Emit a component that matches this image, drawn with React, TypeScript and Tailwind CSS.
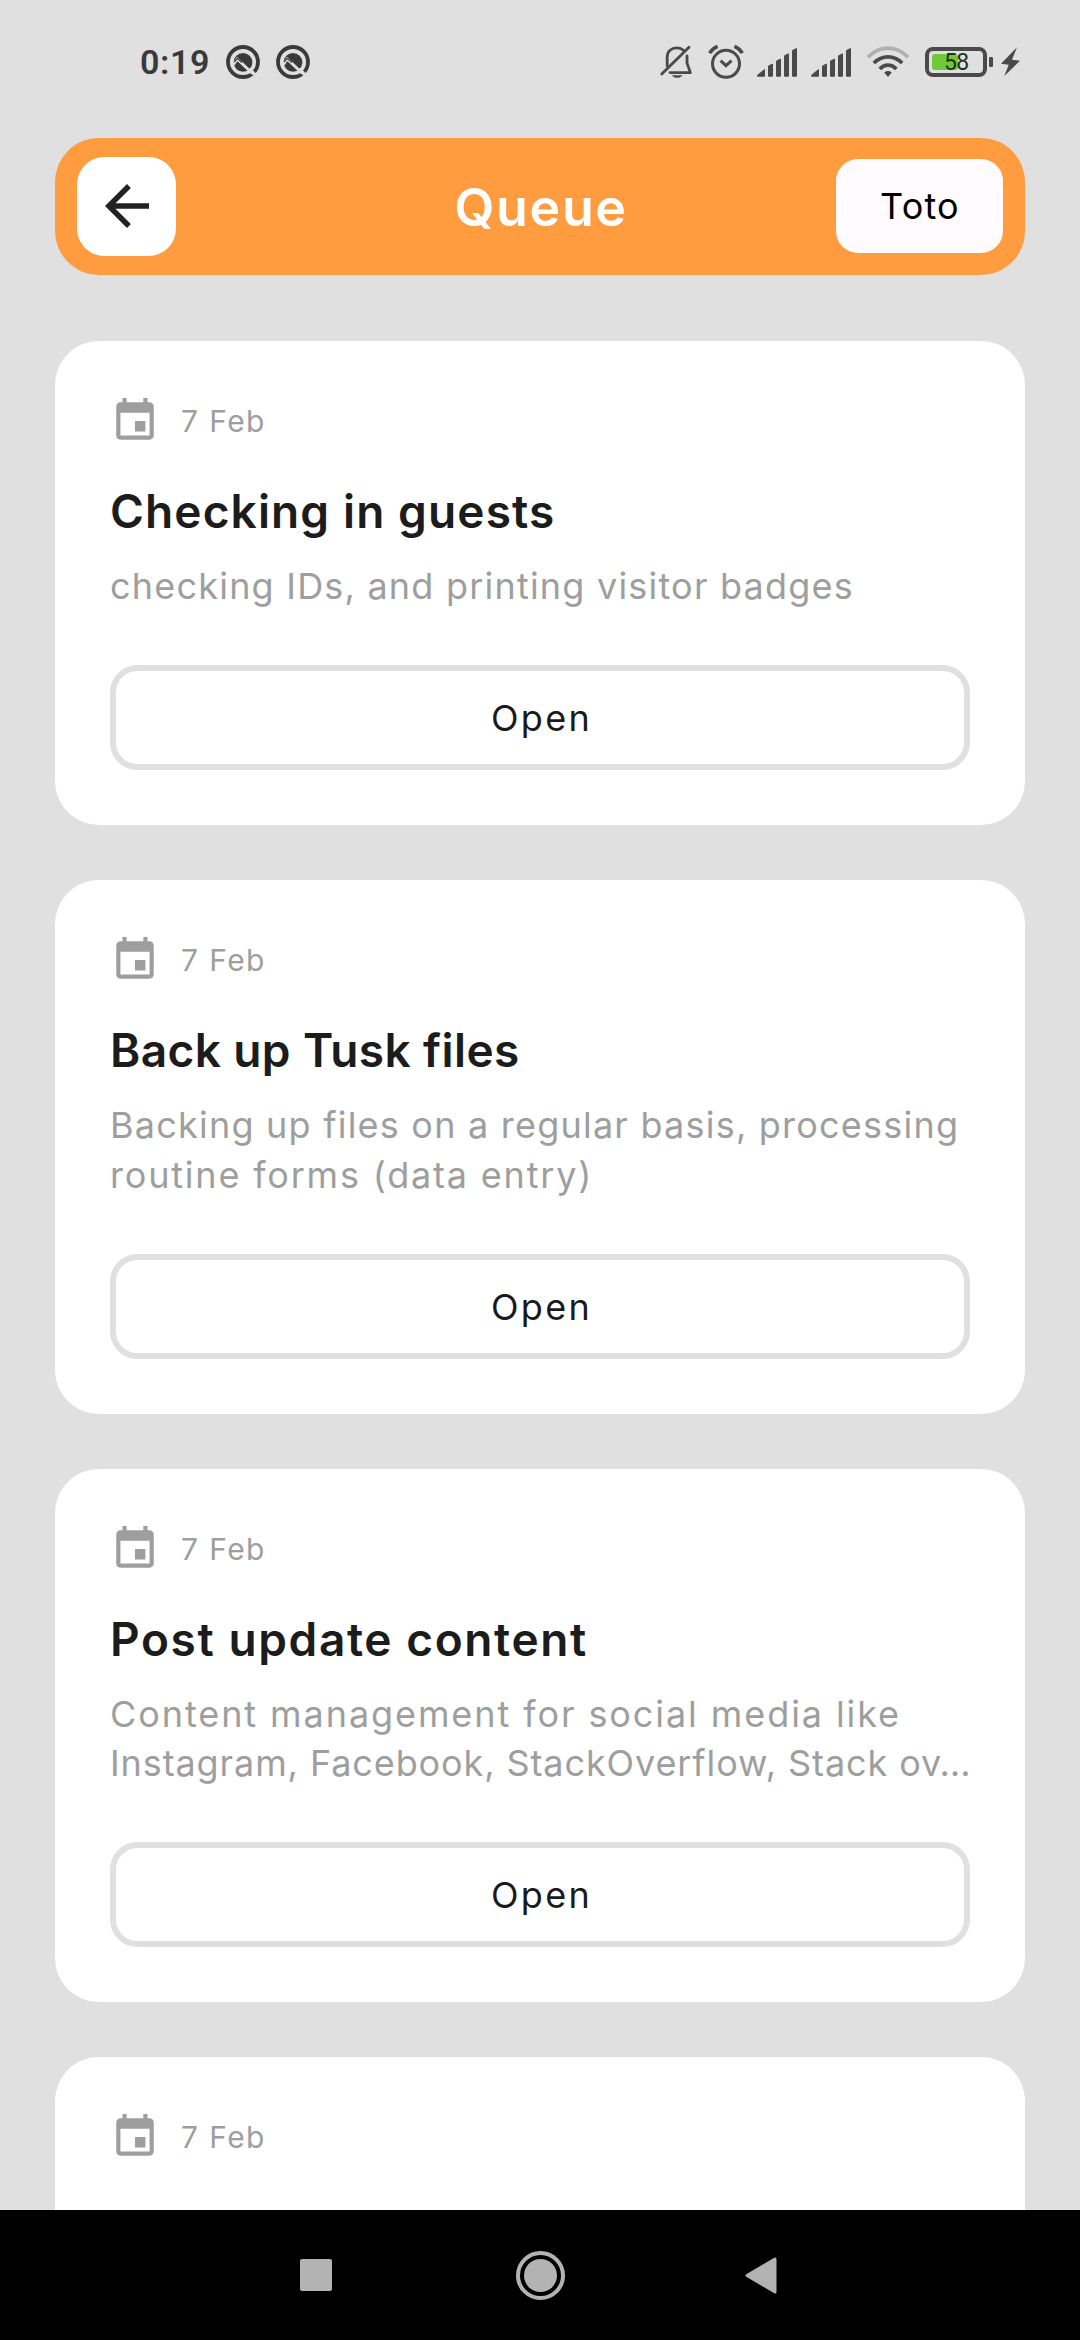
import React from "react";

type Line = { text: string; tracking: string };
type Task = { title: string; titleTracking: string; lines: Line[]; height: string };

const tasks: Task[] = [
  {
    title: "Checking in guests",
    titleTracking: "tracking-[1.13px]",
    lines: [{ text: "checking IDs, and printing visitor badges", tracking: "tracking-[1.21px]" }],
    height: "h-[484px]",
  },
  {
    title: "Back up Tusk files",
    titleTracking: "tracking-[0.39px]",
    lines: [
      { text: "Backing up files on a regular basis, processing", tracking: "tracking-[1.22px]" },
      { text: "routine forms (data entry)", tracking: "tracking-[1.81px]" },
    ],
    height: "h-[533.5px]",
  },
  {
    title: "Post update content",
    titleTracking: "tracking-[1.61px]",
    lines: [
      { text: "Content management for social media like", tracking: "tracking-[1.92px]" },
      { text: "Instagram, Facebook, StackOverflow, Stack ov…", tracking: "tracking-[0.9px]" },
    ],
    height: "h-[533.5px]",
  },
];

function BetaIcon() {
  return (
    <svg className="h-[36px] w-[36px]" viewBox="225 43.5 36 36" fill="none">
      <circle cx="243" cy="61.5" r="15" stroke="#3a3a3a" strokeWidth="3.8" />
      <circle cx="243" cy="61.8" r="9.4" fill="#3a3a3a" />
      <path d="M233 64.5L237.2 58.5L252.5 73" stroke="#e0e0e0" strokeWidth="3" />
      <path d="M249 68.5L258.5 77.5" stroke="#e0e0e0" strokeWidth="3.4" />
      <path d="M234.2 61.5L237.3 57.8L242 62" stroke="#3a3a3a" strokeWidth="1.2" />
    </svg>
  );
}

function BellOffIcon() {
  return (
    <svg className="h-[36px] w-[36px]" viewBox="659 44 36 36" fill="none" stroke="#4a4a4a" strokeWidth="2.8" strokeLinecap="round">
      <path d="M667.2 66V57C667.2 51.2 671.5 47.8 676.6 47.8C679.6 47.8 682 48.8 683.6 50.4" />
      <path d="M687 56V63L690.4 72.6H670" strokeLinejoin="round" />
      <path d="M689 47.2L661.8 74" />
      <path d="M671.8 75.2H682.6C680.5 78.6 673.9 78.6 671.8 75.2Z" fill="#4a4a4a" stroke="none" />
    </svg>
  );
}

function AlarmIcon() {
  return (
    <svg className="h-[36px] w-[36px]" viewBox="708 44 36 36" fill="none" stroke="#4a4a4a" strokeWidth="3">
      <circle cx="726" cy="63.8" r="13.5" />
      <path d="M720.6 60.6L726 65.6L731.5 60.6" strokeWidth="3" />
      <path d="M709.6 53.2C711.4 50.2 714.2 47.8 717.6 46.4M742.4 53.2C740.6 50.2 737.8 47.8 734.4 46.4" strokeWidth="3.4" />
    </svg>
  );
}

function SignalIcon() {
  return (
    <svg className="h-[30px] w-[40px]" viewBox="757 46 40 30" fill="#4a4a4a" stroke="#4a4a4a" strokeWidth="1" strokeLinejoin="round">
      <path d="M757.5 75.2V74.2L764.5 68.6V75.2ZM768.5 75.2V65L772.5 63V75.2ZM776.5 75.2V60L780.5 58V75.2ZM784.5 75.2V54.8L788.5 52.8V75.2ZM792.5 75.2V49.5L796.5 47.5V75.2Z" />
    </svg>
  );
}

function WifiIcon() {
  return (
    <svg className="h-[34px] w-[42px]" viewBox="867 46 42 34" fill="none" strokeWidth="3.8">
      <path d="M868 58.2Q877 49.2 888 49.2T908 58.2" stroke="#b0b0b0" />
      <path d="M873.8 64Q880 57.8 888 57.8T902.2 64" stroke="#4a4a4a" />
      <path d="M879.8 70Q883.4 66.2 888 66.2T896.4 70" stroke="#4a4a4a" />
      <path d="M884.2 73.6C886 71.4 890 71.4 891.8 73.6L888 78Z" fill="#4a4a4a" />
    </svg>
  );
}

function StatusBar() {
  return (
    <header className="flex h-[137.5px] shrink-0 items-start justify-between pt-[43.5px] pr-[60px] pl-[140px]">
      <div className="flex h-[36px] items-center">
        <span className="w-[85px] font-['Roboto'] text-[34px] leading-[36px] font-semibold tracking-[0.6px] text-[#3a3a3a]">
          0:19
        </span>
        <BetaIcon />
        <div className="w-[14px]" />
        <BetaIcon />
      </div>
      <div className="flex h-[36px] items-center">
        <BellOffIcon />
        <div className="w-[13px]" />
        <AlarmIcon />
        <div className="w-[13px]" />
        <SignalIcon />
        <div className="w-[14px]" />
        <SignalIcon />
        <div className="w-[16px]" />
        <WifiIcon />
        <div className="w-[16px]" />
        <div className="relative h-[30px] w-[62px] rounded-[8px] border-4 border-[#4a4a4a]">
          <div className="mt-[3px] ml-[3px] h-[16px] w-[26px] rounded-[3px] bg-[#70c93b]" />
          <span className="absolute top-0 left-[15px] font-['Roboto'] text-[23px] leading-[24px] tracking-[-0.8px] text-[#1f3318]">
            58
          </span>
        </div>
        <div className="ml-[2px] h-[10px] w-[4px] rounded-[1px] bg-[#4a4a4a]" />
        <svg className="ml-[7px] h-[32px] w-[20px]" viewBox="1000 46 20 32" fill="#4a4a4a">
          <path d="M1017 47.3L1001 63.7L1008.7 64.7L1004.3 76L1020 60.7L1012 59.7Z" />
        </svg>
      </div>
    </header>
  );
}

function DateRow() {
  return (
    <div className="flex h-[50px] items-center text-[#9e9e9e]">
      <svg className="h-[50px] w-[50px]" viewBox="0 0 24 24" fill="currentColor">
        <path d="M17 12h-5v5h5v-5zM16 1v2H8V1H6v2H5c-1.11 0-1.99.9-1.99 2L3 19c0 1.1.89 2 2 2h14c1.1 0 2-.9 2-2V5c0-1.1-.9-2-2-2h-1V1h-2zm3 18H5V8h14v11z" />
      </svg>
      <span className="ml-[21px] text-[30px] leading-[50px] tracking-[1.4px]">7 Feb</span>
    </div>
  );
}

function TaskCard({ task }: { task: Task }) {
  return (
    <article className={`shrink-0 rounded-[44px] bg-white px-[55px] pt-[55px] ${task.height}`}>
      <DateRow />
      <h2 className={`mt-[35px] text-[46px] leading-[60px] font-semibold whitespace-nowrap text-[#1c1c1c] ${task.titleTracking}`}>
        {task.title}
      </h2>
      <div className="mt-[21px] text-[36px] leading-[49.5px] text-[#9e9e9e]">
        {task.lines.map((line) => (
          <p key={line.text} className={`whitespace-nowrap ${line.tracking}`}>
            {line.text}
          </p>
        ))}
      </div>
      <button className="mt-[53.5px] block h-[105px] w-full rounded-[27.5px] border-[6px] border-[#e0e0e0] pl-[3px] text-center text-[36px] leading-[95px] tracking-[2.3px] text-[#1a1a1c]">
        Open
      </button>
    </article>
  );
}

export default function App() {
  return (
    <div className="flex h-[2340px] w-[1080px] flex-col overflow-hidden bg-[#e0e0e0] font-['Inter',sans-serif]">
      <StatusBar />
      <nav className="mx-[55px] grid h-[137.5px] shrink-0 grid-cols-[1fr_auto_1fr] items-center rounded-[44px] bg-[#ff9c40] px-[22px]">
        <button className="flex h-[99px] w-[99px] items-center justify-center rounded-[27.5px] bg-white">
          <svg className="h-[66px] w-[66px]" viewBox="0 0 24 24" fill="#222">
            <path d="M20 11H7.83l5.59-5.59L12 4l-8 8 8 8 1.41-1.41L7.83 13H20v-2z" />
          </svg>
        </button>
        <h1 className="mt-[3px] pl-[2px] text-[52px] leading-[60px] font-semibold tracking-[1.6px] text-white">Queue</h1>
        <button className="h-[94px] w-[167px] justify-self-end rounded-[22px] bg-[#fffbff] pl-[1px] text-[36px] leading-[94px] tracking-[1.2px] text-black">
          Toto
        </button>
      </nav>
      <main className="mt-[66px] flex min-h-0 flex-1 flex-col gap-[55px] px-[55px]">
        {tasks.map((task) => (
          <TaskCard key={task.title} task={task} />
        ))}
        <article className="min-h-0 flex-1 rounded-t-[44px] bg-white px-[55px] pt-[55px]">
          <DateRow />
        </article>
      </main>
      <footer className="flex h-[130px] shrink-0 items-center justify-between bg-black pr-[303px] pl-[300px]">
        <div className="h-[32px] w-[32px] rounded-[2px] bg-[#b3b3b3]" />
        <div className="ml-[3px] flex h-[49px] w-[49px] items-center justify-center rounded-full border-4 border-[#b3b3b3]">
          <div className="h-[33px] w-[33px] rounded-full bg-[#b3b3b3]" />
        </div>
        <svg className="h-[37px] w-[32px]" viewBox="0 0 32 37" fill="#b3b3b3" stroke="#b3b3b3" strokeWidth="3" strokeLinejoin="round">
          <path d="M2 18.5L30 2V35Z" />
        </svg>
      </footer>
    </div>
  );
}
